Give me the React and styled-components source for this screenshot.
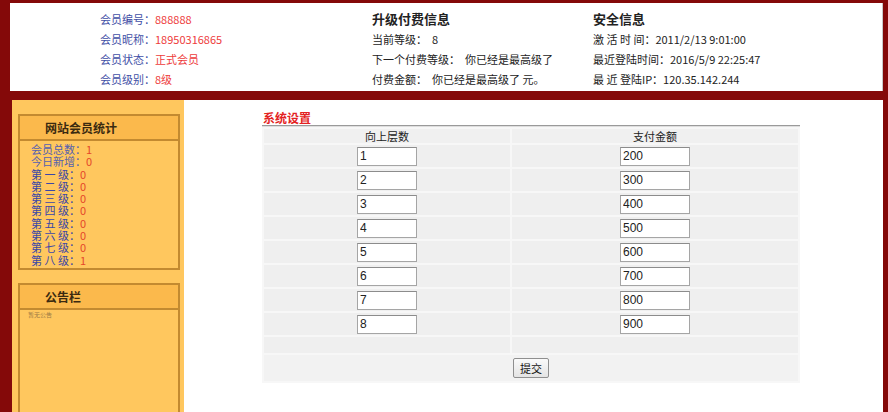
import React from 'react';
import styled, { createGlobalStyle } from 'styled-components';

const GlobalStyle = createGlobalStyle`
  body {
    margin: 0;
    font-family: "Noto Sans CJK SC", "Liberation Sans", sans-serif;
    font-size: 11px;
  }
`;

const memberInfo = [
  { label: '会员编号：', value: '888888' },
  { label: '会员昵称：', value: '18950316865' },
  { label: '会员状态：', value: '正式会员' },
  { label: '会员级别：', value: '8级' },
];

const stats = [
  { label: '会员总数：', value: '1', plain: true },
  { label: '今日新增：', value: '0', plain: true },
  { label: '第 一 级：', value: '0' },
  { label: '第 二 级：', value: '0' },
  { label: '第 三 级：', value: '0' },
  { label: '第 四 级：', value: '0' },
  { label: '第 五 级：', value: '0' },
  { label: '第 六 级：', value: '0' },
  { label: '第 七 级：', value: '0' },
  { label: '第 八 级：', value: '1' },
];

const levels = [
  ['1', '200'],
  ['2', '300'],
  ['3', '400'],
  ['4', '500'],
  ['5', '600'],
  ['6', '700'],
  ['7', '800'],
  ['8', '900'],
];

const App = () => {
  return (
    <>
      <GlobalStyle />
      <Page>
        <Header>
          <InfoColumn>
            {memberInfo.map((item) => (
              <InfoLine key={item.label}>
                <BlueLabel>{item.label}</BlueLabel>
                <RedValue>{item.value}</RedValue>
              </InfoLine>
            ))}
          </InfoColumn>
          <InfoColumn>
            <InfoTitle>升级付费信息</InfoTitle>
            <InfoLine>当前等级：&nbsp; 8</InfoLine>
            <InfoLine>下一个付费等级：&nbsp; 你已经是最高级了</InfoLine>
            <InfoLine>付费金额：&nbsp; 你已经是最高级了 元。</InfoLine>
          </InfoColumn>
          <InfoColumn>
            <InfoTitle>安全信息</InfoTitle>
            <InfoLine>激 活 时 间：2011/2/13 9:01:00</InfoLine>
            <InfoLine>最近登陆时间：2016/5/9 22:25:47</InfoLine>
            <InfoLine>最 近 登陆IP：120.35.142.244</InfoLine>
          </InfoColumn>
        </Header>
        <Band />
        <Body>
          <Sidebar>
            <SideBox>
              <SideHead>网站会员统计</SideHead>
              <StatList>
                {stats.map((item) => (
                  <StatRow key={item.label}>
                    <StatLabel $plain={item.plain}>{item.label}</StatLabel>
                    <StatValue>{item.value}</StatValue>
                  </StatRow>
                ))}
              </StatList>
            </SideBox>
            <NoticeBox>
              <SideHead>公告栏</SideHead>
              <NoticeText>暂无公告</NoticeText>
            </NoticeBox>
          </Sidebar>
          <Main>
            <Panel>
              <PanelTitle>系统设置</PanelTitle>
              <Grid>
                <tbody>
                  <tr>
                    <HeadCell $w={246}>向上层数</HeadCell>
                    <HeadCell>支付金额</HeadCell>
                  </tr>
                  {levels.map(([layer, amount]) => (
                    <tr key={layer}>
                      <Cell>
                        <Field $w={60} defaultValue={layer} />
                      </Cell>
                      <Cell>
                        <Field $w={70} defaultValue={amount} />
                      </Cell>
                    </tr>
                  ))}
                  <tr>
                    <EmptyCell />
                    <EmptyCell />
                  </tr>
                  <tr>
                    <ButtonCell colSpan={2}>
                      <Submit type="button">提交</Submit>
                    </ButtonCell>
                  </tr>
                </tbody>
              </Grid>
            </Panel>
          </Main>
        </Body>
      </Page>
    </>
  );
};

const Page = styled.div`
  height: 412px;
  box-sizing: border-box;
  padding: 3px 5px 0 10px;
  background: #840909;
  display: flex;
  flex-direction: column;
  overflow: hidden;
`;

const Header = styled.div`
  height: 88px;
  flex-shrink: 0;
  background: #ffffff;
  box-sizing: border-box;
  padding: 6px 0 0 90px;
  display: grid;
  grid-template-columns: 272px 221px 1fr;
  border-right: 1px solid #c9c9c9;
`;

const InfoColumn = styled.div`
  display: flex;
  flex-direction: column;
`;

const InfoLine = styled.div`
  height: 20px;
  line-height: 20px;
  font-size: 11px;
  color: #222;
  white-space: nowrap;
`;

const InfoTitle = styled.div`
  height: 20px;
  line-height: 20px;
  font-size: 13px;
  font-weight: bold;
  color: #222;
`;

const BlueLabel = styled.span`
  color: #3f4fa6;
`;

const RedValue = styled.span`
  color: #ee3b3b;
`;

const Band = styled.div`
  height: 9px;
  flex-shrink: 0;
`;

const Body = styled.div`
  flex: 1;
  display: flex;
  padding-left: 2px;
  min-height: 0;
`;

const Sidebar = styled.div`
  width: 172px;
  flex-shrink: 0;
  background: #ffc75e;
  box-sizing: border-box;
  padding: 14px 0 0 6px;
  display: flex;
  flex-direction: column;
  gap: 13px;
`;

const SideBox = styled.div`
  width: 162px;
  box-sizing: border-box;
  border: 2px solid #c38a30;
  padding-bottom: 2px;
`;

const NoticeBox = styled(SideBox)`
  flex: 1;
  border-bottom: none;
`;

const SideHead = styled.div`
  height: 23px;
  line-height: 23px;
  padding-left: 25px;
  background: #fbb94c;
  border-bottom: 2px solid #c38a30;
  font-size: 12px;
  font-weight: bold;
  color: #3a2a10;
`;

const StatList = styled.div`
  padding: 2px 0 0 11px;
`;

const StatRow = styled.div`
  height: 12.3px;
  line-height: 12.3px;
  font-size: 11px;
  white-space: nowrap;
`;

const StatLabel = styled.span`
  color: ${(p) => (p.$plain ? '#5560b0' : '#3a46a8')};
`;

const StatValue = styled.span`
  color: #e5462a;
`;

const NoticeText = styled.div`
  padding: 1px 0 0 8px;
  font-size: 6px;
  line-height: 7px;
  color: #9b7a45;
`;

const Main = styled.div`
  flex: 1;
  background: #ffffff;
  box-sizing: border-box;
  padding: 11px 0 0 78px;
`;

const Panel = styled.div`
  width: 538px;
`;

const PanelTitle = styled.div`
  height: 14px;
  line-height: 14px;
  padding-left: 1px;
  font-size: 12px;
  font-weight: bold;
  color: #e32222;
  border-bottom: 1px solid #9a9a9a;
  box-shadow: 0 1px 0 #dedede;
`;

const Grid = styled.table`
  width: 100%;
  border-collapse: separate;
  border-spacing: 2px;
  background: #f7f7f7;
  margin-top: 1px;
`;

const HeadCell = styled.td`
  width: ${(p) => (p.$w ? `${p.$w}px` : 'auto')};
  height: 14px;
  padding: 0;
  background: #f0f0f0;
  text-align: center;
  font-size: 11px;
  line-height: 14px;
  color: #222;
`;

const Cell = styled.td`
  height: 22px;
  padding: 0;
  background: #efefef;
  text-align: center;
  vertical-align: middle;
`;

const EmptyCell = styled.td`
  height: 16px;
  padding: 0;
  background: #efefef;
`;

const ButtonCell = styled.td`
  height: 26px;
  padding: 0;
  background: #f2f2f2;
  text-align: center;
  vertical-align: middle;
`;

const Field = styled.input`
  width: ${(p) => p.$w}px;
  height: 19px;
  box-sizing: border-box;
  margin: 0;
  padding: 0 2px;
  border: 1px solid #a5a5a5;
  border-top-color: #8c8c8c;
  background: #ffffff;
  font-family: "Liberation Sans", sans-serif;
  font-size: 12px;
  color: #222;
  display: inline-block;
  vertical-align: middle;
`;

const Submit = styled.button`
  width: 36px;
  height: 20px;
  padding: 0;
  border: 1px solid #8f8f8f;
  border-radius: 2px;
  background: linear-gradient(#fafafa, #e4e4e4);
  font-family: "Noto Sans CJK SC", sans-serif;
  font-size: 11px;
  color: #111;
  vertical-align: middle;
`;

export default App;
